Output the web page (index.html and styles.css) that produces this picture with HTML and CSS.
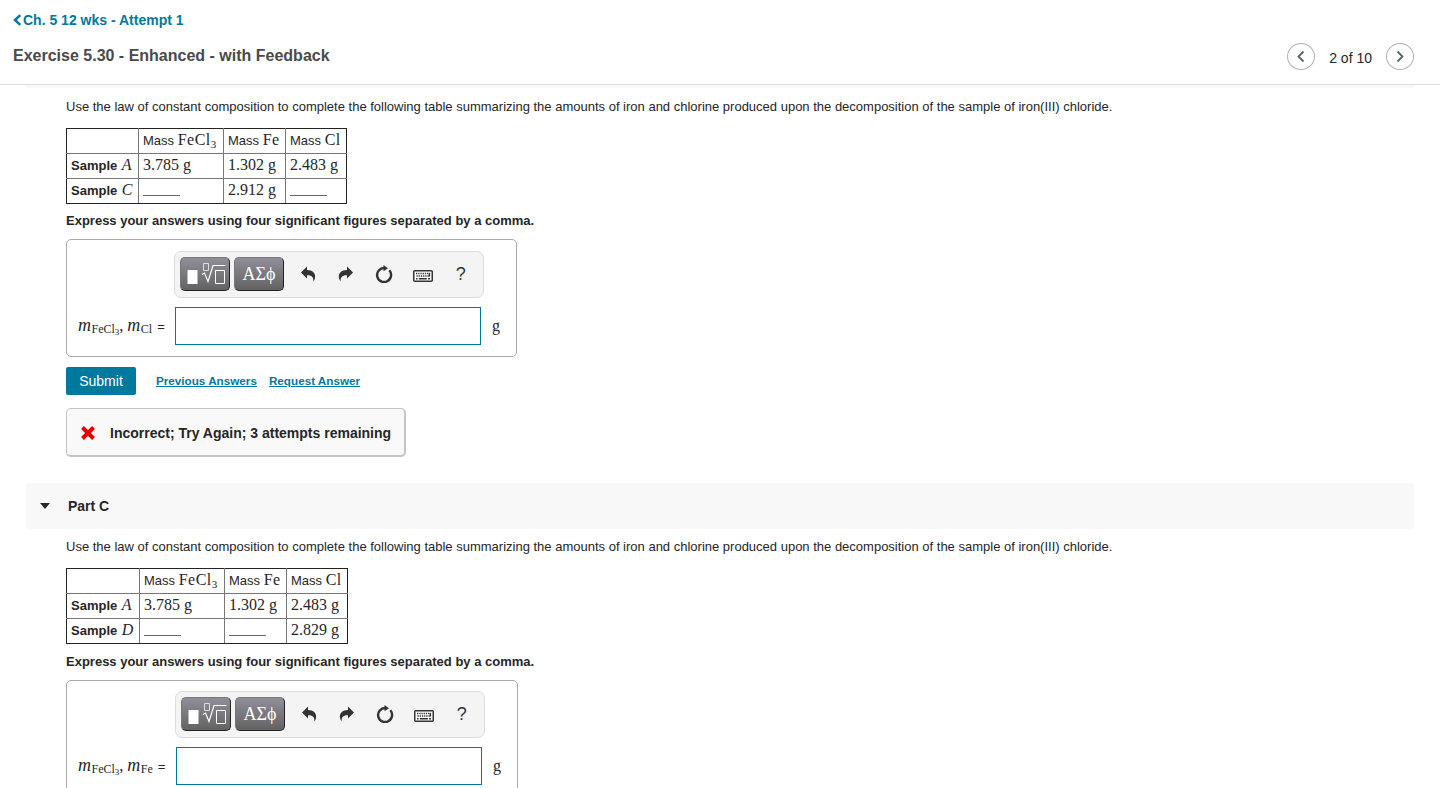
FILE: index.html
```html
<!DOCTYPE html>
<html lang="en">
  <head>
    <meta charset="UTF-8" />
    <meta name="viewport" content="width=device-width, initial-scale=1.0" />
    <title>Exercise 5.30 - Enhanced - with Feedback</title>
    <link rel="stylesheet" href="styles.css">
  </head>
  <body>
    <!-- shared icons -->
    <svg class="sprite" width="0" height="0">
      <symbol id="icon-template" viewBox="0 0 48 32">
        <path d="M6.500 12h10v14h-10z" fill="#fff" />
        <path d="M22.500 5.500h5v7h-5z" fill="none" stroke="#ddd" />
        <path d="M21 16.500l2.500-1.500 3.500 8.500L32 7.500h12.500" fill="none" stroke="#fff" stroke-width="1.200" />
        <path d="M34.500 12.500h9v13h-9z" fill="none" stroke="#fff" />
      </symbol>
      <symbol id="icon-undo" viewBox="0 0 16 16">
        <path d="M1 6.500L7 .5V4c5.500 0 9 3.300 8 8-.3 1.400-.9 2.500-1.700 3.500.5-4-1.300-6.500-6.300-6.300V12.500z" />
      </symbol>
      <symbol id="icon-reset" viewBox="0 0 18 18">
        <path d="M9.500 3A7 7 0 1 0 14.300 5.300" fill="none" stroke="#333" stroke-width="2.400" />
        <path d="M8.500 0l4.500 3.200-4.500 3z" />
      </symbol>
      <symbol id="icon-keyboard" viewBox="0 0 20 12">
        <rect x="0.750" y="0.750" width="18.500" height="10.500" rx="1" fill="#fff" stroke="#333" stroke-width="1.500" />
        <path d="M3 3.500h14M3.500 6h13" stroke="#333" stroke-width="1.500" stroke-dasharray="1.300 .9" />
        <path d="M3 8.700h1.500M5.800 8.700h8M15 8.700h2M16.400 3v3.500" stroke="#333" stroke-width="1.400" />
      </symbol>
    </svg>

    <header class="header">
      <div>
        <a class="back-link" href="#"><svg width="10" height="12" viewBox="0 0 10 12"><path d="M7.200 1.200L2 6l5.200 4.800" /></svg>Ch. 5 12 wks - Attempt 1</a>
        <h1>Exercise 5.30 - Enhanced - with Feedback</h1>
      </div>
      <nav class="pager">
        <button class="round"><svg width="10" height="14" viewBox="0 0 10 14"><path d="M7.500 1.500L2.500 6.500l5 5" /></svg></button>
        <span>2 of 10</span>
        <button class="round"><svg width="10" height="14" viewBox="0 0 10 14"><path d="M2.500 1.500l5 5-5 5" /></svg></button>
      </nav>
    </header>

    <main>
      <div class="part-title-end"></div>
      <section class="part part-b">
        <p class="question">Use the law of constant composition to complete the following table summarizing the amounts of iron and chlorine produced upon the decomposition of the sample of iron(III) chloride.</p>
        <table>
          <colgroup><col class="name"><col class="fecl"><col class="fe"><col class="cl"></colgroup>
          <tr>
            <td></td>
            <td>Mass <span class="math sym">FeCl<sub>3</sub></span></td>
            <td>Mass <span class="math sym">Fe</span></td>
            <td>Mass <span class="math sym">Cl</span></td>
          </tr>
          <tr>
            <th>Sample <i class="math">A</i></th>
            <td class="math">3.785 g</td>
            <td class="math">1.302 g</td>
            <td class="math">2.483 g</td>
          </tr>
          <tr>
            <th>Sample <i class="math">C</i></th>
            <td><span class="blank"></span></td>
            <td class="math">2.912 g</td>
            <td><span class="blank"></span></td>
          </tr>
        </table>
        <p class="instruction">Express your answers using four significant figures separated by a comma.</p>
        <div class="answer-box">
          <div class="toolbar">
            <button class="tool-dark"><svg width="48" height="32"><use href="#icon-template" /></svg></button>
            <button class="tool-dark">ΑΣϕ</button>
            <button class="tool"><svg width="16" height="16"><use href="#icon-undo" /></svg></button>
            <button class="tool"><svg class="flip" width="16" height="16"><use href="#icon-undo" /></svg></button>
            <button class="tool"><svg width="18" height="18"><use href="#icon-reset" /></svg></button>
            <button class="tool"><svg class="keyboard" width="20" height="12"><use href="#icon-keyboard" /></svg></button>
            <button class="tool">?</button>
          </div>
          <div class="answer-row">
            <div class="formula"><i>m</i><sub>FeCl<small>3</small></sub><span class="comma">,</span><i>m</i><sub>Cl</sub><span class="equals">=</span></div>
            <input type="text">
            <span class="unit">g</span>
          </div>
        </div>
        <div class="actions">
          <button class="submit">Submit</button>
          <a href="#">Previous Answers</a>
          <a href="#">Request Answer</a>
        </div>
        <div class="feedback">
          <svg width="16" height="16" viewBox="0 0 16 16"><path d="M2.500 2.500l11 11M13.500 2.500l-11 11" /></svg>
          <span>Incorrect; Try Again; 3 attempts remaining</span>
        </div>
      </section>

      <h2 class="part-title"><span class="caret"></span>Part C</h2>
      <section class="part part-c">
        <p class="question">Use the law of constant composition to complete the following table summarizing the amounts of iron and chlorine produced upon the decomposition of the sample of iron(III) chloride.</p>
        <table>
          <colgroup><col class="name"><col class="fecl"><col class="fe"><col class="cl"></colgroup>
          <tr>
            <td></td>
            <td>Mass <span class="math sym">FeCl<sub>3</sub></span></td>
            <td>Mass <span class="math sym">Fe</span></td>
            <td>Mass <span class="math sym">Cl</span></td>
          </tr>
          <tr>
            <th>Sample <i class="math">A</i></th>
            <td class="math">3.785 g</td>
            <td class="math">1.302 g</td>
            <td class="math">2.483 g</td>
          </tr>
          <tr>
            <th>Sample <i class="math">D</i></th>
            <td><span class="blank"></span></td>
            <td><span class="blank"></span></td>
            <td class="math">2.829 g</td>
          </tr>
        </table>
        <p class="instruction">Express your answers using four significant figures separated by a comma.</p>
        <div class="answer-box">
          <div class="toolbar">
            <button class="tool-dark"><svg width="48" height="32"><use href="#icon-template" /></svg></button>
            <button class="tool-dark">ΑΣϕ</button>
            <button class="tool"><svg width="16" height="16"><use href="#icon-undo" /></svg></button>
            <button class="tool"><svg class="flip" width="16" height="16"><use href="#icon-undo" /></svg></button>
            <button class="tool"><svg width="18" height="18"><use href="#icon-reset" /></svg></button>
            <button class="tool"><svg class="keyboard" width="20" height="12"><use href="#icon-keyboard" /></svg></button>
            <button class="tool">?</button>
          </div>
          <div class="answer-row">
            <div class="formula"><i>m</i><sub>FeCl<small>3</small></sub><span class="comma">,</span><i>m</i><sub>Fe</sub><span class="equals">=</span></div>
            <input type="text">
            <span class="unit">g</span>
          </div>
        </div>
      </section>
    </main>
  </body>
</html>
```
FILE: styles.css
```css
* {
  box-sizing: border-box;
}
body {
  margin: 0;
  height: 100vh;
  overflow: hidden;
  background: #fff;
  color: #262626;
  font-family: "Liberation Sans", Arial, sans-serif;
  font-size: 13px;
}
button {
  padding: 0;
  border: none;
  background: none;
  font-family: inherit;
  color: inherit;
}
.sprite {
  display: block;
}

/* header */
.header {
  display: flex;
  justify-content: space-between;
  height: 85px;
  padding: 12px 26px 0 13px;
  border-bottom: 1px solid #dcdcdc;
}
.back-link {
  display: flex;
  align-items: center;
  height: 16px;
  color: #007a9c;
  font-size: 14px;
  font-weight: bold;
  text-decoration: none;
  white-space: nowrap;
}
.back-link svg {
  fill: none;
  stroke: #007a9c;
  stroke-width: 2.5;
}
h1 {
  margin: 18px 0 0;
  color: #4a4a4a;
  font-size: 16px;
  line-height: 20px;
}
.pager {
  display: flex;
  align-items: flex-start;
  gap: 14px;
  padding-top: 31px;
}
.pager span {
  font-size: 14px;
  line-height: 29px;
  padding-top: 1px;
}
.round {
  display: flex;
  align-items: center;
  justify-content: center;
  width: 28px;
  height: 27px;
  border: 1px solid #b0b4b4;
  border-radius: 50%;
}
.round svg {
  fill: none;
  stroke: #566;
  stroke-width: 1.8;
}

/* parts */
.part-title-end {
  height: 3px;
  margin: 0 26px;
  background: #f8f8f8;
}
.part {
  padding: 11px 0 0 66px;
}
.question,
.instruction {
  margin: 0;
  line-height: 16px;
  white-space: nowrap;
}
.instruction {
  margin-top: 9px;
  font-weight: bold;
}
.part-title {
  display: flex;
  align-items: center;
  height: 46px;
  margin: 26px 26px 0;
  padding-left: 14px;
  background: #f8f8f8;
  font-size: 14px;
}
.caret {
  margin-right: 18px;
  border: 5px solid transparent;
  border-top: 6px solid #262626;
  border-bottom: 0;
}
.part-c {
  padding-top: 10px;
}

/* data table */
table {
  table-layout: fixed;
  width: 281px;
  margin-top: 13px;
  border: 1px solid #222;
  border-collapse: collapse;
}
.name { width: 72px; }
.fecl { width: 85px; }
.fe { width: 62px; }
.cl { width: 61px; }
th,
td {
  height: 25px;
  padding: 0 4px 2px;
  border: 1px solid #777;
  line-height: 20px;
  text-align: left;
  white-space: nowrap;
}
tr:first-child td { border-top-color: #222; }
tr:last-child > * { border-bottom-color: #222; }
tr > :first-child { border-left-color: #222; }
tr > :last-child { border-right-color: #222; }
.math {
  font-family: "Liberation Serif", "Times New Roman", serif;
  font-size: 16px;
  font-weight: normal;
}
th .math {
  margin-left: 1px;
}
.sym {
  letter-spacing: 0.5px;
}
.math sub {
  font-size: 11px;
  line-height: 0;
  vertical-align: -3px;
}
.blank {
  display: block;
  width: 37px;
  height: 1px;
  margin-top: 11px;
  background: #666;
}
.part-c table { width: 282px; margin-top: 13px; }
.part-c .name { width: 73px; }
.part-c .instruction { margin-top: 10px; }

/* answer */
.answer-box {
  width: 451px;
  height: 118px;
  margin-top: 10px;
  padding: 11px 11px 0;
  border: 1px solid #aaa;
  border-radius: 5px;
}
.toolbar {
  display: flex;
  align-items: center;
  width: 310px;
  height: 47px;
  margin-left: 96px;
  padding: 0 0 1px 5px;
  border: 1px solid #ddd;
  border-radius: 7px;
  background: #f4f4f4;
}
.tool-dark {
  width: 50px;
  height: 34px;
  margin-right: 4px;
  flex-shrink: 0;
  border: 1px solid #777;
  border-right-color: #222;
  border-bottom-color: #222;
  border-radius: 5px;
  background: linear-gradient(#918e99, #626262);
  color: #fff;
  font-family: "Liberation Serif", "Times New Roman", serif;
  font-size: 18px;
}
.tool-dark svg {
  display: block;
}
.tool {
  display: flex;
  flex-shrink: 0;
  align-items: center;
  justify-content: center;
  width: 38.2px;
  height: 34px;
  color: #333;
  font-size: 18px;
}
.tool-dark + .tool {
  margin-left: 1px;
}
.tool svg {
  fill: #333;
}
.flip {
  transform: scaleX(-1);
}
.keyboard {
  margin-top: 4px;
}
.answer-row {
  display: flex;
  align-items: center;
  margin-top: 9px;
}
.formula {
  display: flex;
  align-items: baseline;
  width: 97px;
  height: 22px;
  font-family: "Liberation Serif", "Times New Roman", serif;
  font-size: 17px;
  line-height: 20px;
}
.formula i {
  width: 13.5px;
  font-size: 18px;
}
.formula sub {
  position: relative;
  top: 2px;
  font-size: 12px;
  line-height: 12px;
  vertical-align: baseline;
}
.formula small {
  position: relative;
  top: 2px;
  font-size: 9px;
}
.comma {
  width: 8px;
}
.equals {
  margin-left: 5px;
  font-family: "Liberation Sans", Arial, sans-serif;
  font-size: 13px;
}
.answer-row input {
  width: 306px;
  height: 38px;
  border: 1px solid #007a9c;
  outline: none;
}
.unit {
  margin-left: 11px;
  font-family: "Liberation Serif", "Times New Roman", serif;
  font-size: 16px;
}
.part-c .answer-box {
  width: 452px;
  padding-top: 10px;
}
.part-c .toolbar { margin-left: 97px; }
.part-c .formula { width: 98px; }

/* submit and feedback */
.actions {
  display: flex;
  align-items: center;
  margin-top: 10px;
}
.submit {
  width: 70px;
  height: 28px;
  margin-right: 20px;
  border-radius: 2px;
  background: #007a9c;
  color: #fff;
  font-size: 14px;
}
.actions a {
  margin-right: 12px;
  padding-bottom: 2px;
  color: #007a9c;
  font-size: 11.7px;
  font-weight: bold;
}
.feedback {
  display: flex;
  align-items: center;
  width: 340px;
  height: 49px;
  margin-top: 13px;
  padding: 2px 0 0 13px;
  border: 1px solid #c4c4c4;
  border-right-width: 2px;
  border-bottom-width: 2px;
  border-radius: 5px;
  background: #f9f9f9;
  font-size: 14px;
  font-weight: bold;
  white-space: nowrap;
}
.feedback svg {
  margin-right: 14px;
  stroke: #e60000;
  stroke-width: 4;
}
```
